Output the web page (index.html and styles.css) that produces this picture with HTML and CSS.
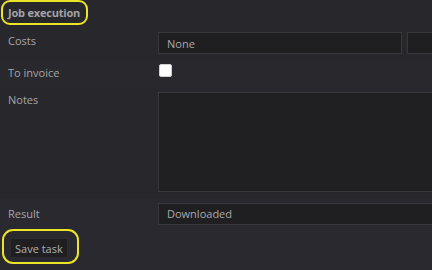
FILE: index.html
```html
<!DOCTYPE html>
<html lang="en">
<head>
    <meta charset="UTF-8">
    <title>Job execution</title>
    <link rel="stylesheet" href="styles.css">
</head>
<body>
    <div class="panel">
        <div class="section-title">
            <span class="mark">Job execution</span>
        </div>

        <div class="row row-costs">
            <label class="label">Costs</label>
            <div class="field pair">
                <input type="text" class="input" value="None">
                <input type="text" class="input">
            </div>
        </div>

        <div class="row row-invoice">
            <label class="label">To invoice</label>
            <div class="field">
                <input type="checkbox" class="check">
            </div>
        </div>

        <div class="row row-notes">
            <label class="label">Notes</label>
            <div class="field">
                <textarea class="input notes"></textarea>
            </div>
        </div>

        <div class="row row-result">
            <label class="label">Result</label>
            <div class="field">
                <div class="input select">Downloaded</div>
            </div>
        </div>

        <div class="actions">
            <span class="mark mark-btn"><button class="btn">Save task</button></span>
        </div>
    </div>
</body>
</html>
```

FILE: styles.css
```css
body {
    margin: 0;
    background: #28272c;
    font-family: "Open Sans", "Noto Sans", sans-serif;
    font-size: 11px;
    color: #a9a9ab;
    overflow: hidden;
}
.panel {
    width: 100%;
    overflow: hidden;
}
.section-title {
    height: 29px;
    padding: 0 0 0 1px;
    box-sizing: border-box;
}
.mark {
    display: inline-block;
    border: 2px solid #ece426;
    border-radius: 9px;
    box-sizing: border-box;
}
.section-title .mark {
    height: 25px;
    padding: 2px 6px 0 5px;
    font-weight: bold;
    color: #a2a2a6;
    line-height: 18px;
    letter-spacing: -0.2px;
}
.row {
    display: grid;
    grid-template-columns: 158px 1fr;
}
.field {
    min-width: 0;
}
.label {
    padding-left: 8px;
    color: #a6a6a8;
}
.row-costs {
    height: 29px;
    padding-top: 3px;
    box-sizing: border-box;
}
.row-costs .label {
    padding-top: 1px;
}
.pair {
    display: flex;
    gap: 5px;
}
.input {
    display: block;
    box-sizing: border-box;
    background: #1f1f21;
    border: 1px solid #38383c;
    color: #a9a9ab;
    font-family: inherit;
    font-size: 11px;
    padding: 0 8px;
    height: 22px;
    line-height: 20px;
    outline: none;
}
.pair .input {
    width: 244px;
    flex: none;
}
.row-invoice {
    height: 30px;
    padding-top: 6px;
    box-sizing: border-box;
    background: #29282d;
}
.row-invoice .label {
    padding-top: 1px;
}
.check {
    appearance: none;
    margin: 0 0 0 1px;
    width: 13px;
    height: 13px;
    background: #ffffff;
    border: 1px solid #d0d0d0;
    border-radius: 2px;
}
.row-notes {
    height: 111px;
    padding-top: 4px;
    box-sizing: border-box;
}
.notes {
    width: 300px;
    height: 100px;
    resize: none;
    background: #202022;
}
.row-result {
    height: 29px;
    padding-top: 4px;
    box-sizing: border-box;
    background: #2a2930;
}
.row-result .label {
    padding-top: 3px;
}
.select {
    width: 300px;
    height: 22px;
}
.actions {
    padding: 1px 0 0 2px;
    background: #2a2930;
    height: 50px;
}
.mark-btn {
    padding: 7px 9px 4px 6px;
    border-radius: 11px;
}
.btn {
    display: block;
    background: #1f1f21;
    border: 1px solid #2c2c30;
    color: #b0b0b2;
    font-family: inherit;
    font-size: 11px;
    height: 20px;
    padding: 0 4px;
    cursor: pointer;
}
```
